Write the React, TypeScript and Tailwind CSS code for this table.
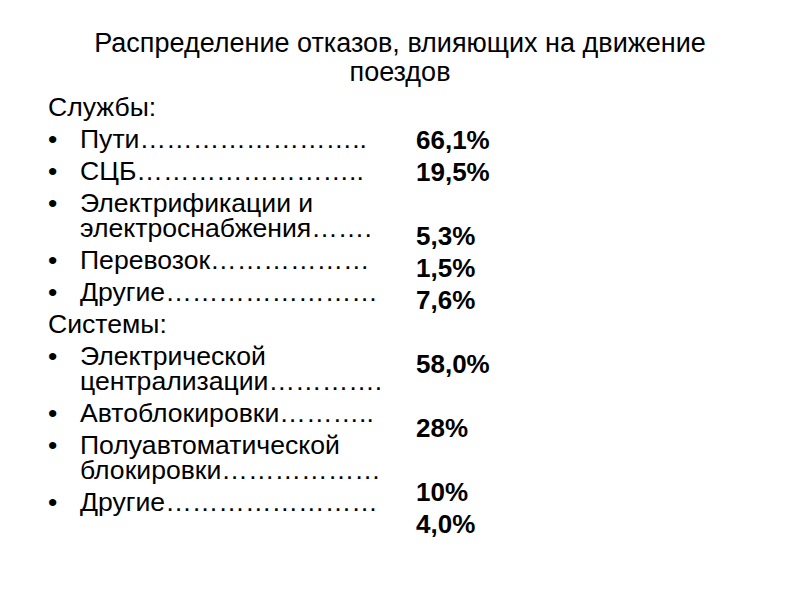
import React from "react";

type Para = { head?: string; lines?: string[] };

const paras: Para[] = [
  { head: "Службы:" },
  { lines: ["Пути…………………….."] },
  { lines: ["СЦБ…………………….."] },
  { lines: ["Электрификации и", "электроснабжения……."] },
  { lines: ["Перевозок………………"] },
  { lines: ["Другие……………………"] },
  { head: "Системы:" },
  { lines: ["Электрической", "централизации…………."] },
  { lines: ["Автоблокировки……….."] },
  { lines: ["Полуавтоматической", "блокировки………………"] },
  { lines: ["Другие……………………"] },
];

const values = ["66,1%", "19,5%", "", "5,3%", "1,5%", "7,6%", "", "58,0%", "", "28%", "", "10%", "4,0%"];

export default function App() {
  return (
    <div
      className="w-[800px] h-[600px] bg-white text-black overflow-hidden"
      style={{ fontFamily: '"Liberation Sans", Arial, sans-serif' }}
    >
      <div className="pt-[29px] text-center text-[27px] leading-[29px]">
        <div>Распределение отказов, влияющих на движение</div>
        <div>поездов</div>
      </div>
      <div className="flex mt-[8px]">
        <div className="w-[416px] pl-[48px] text-[26.6px] leading-[25px] flex flex-col gap-[7px]">
          {paras.map((p, i) =>
            p.head ? (
              <div key={i} className="whitespace-nowrap">{p.head}</div>
            ) : (
              <div key={i} className="flex whitespace-nowrap">
                <span className="w-[32px] shrink-0">•</span>
                <div className="flex flex-col">
                  {p.lines!.map((l, j) => (
                    <span key={j}>{l}</span>
                  ))}
                </div>
              </div>
            )
          )}
        </div>
        <div className="pt-[29px] text-[26px] leading-[32px] font-bold flex flex-col">
          {values.map((v, i) => (
            <div key={i} className="h-[32px]">{v}</div>
          ))}
        </div>
      </div>
    </div>
  );
}
